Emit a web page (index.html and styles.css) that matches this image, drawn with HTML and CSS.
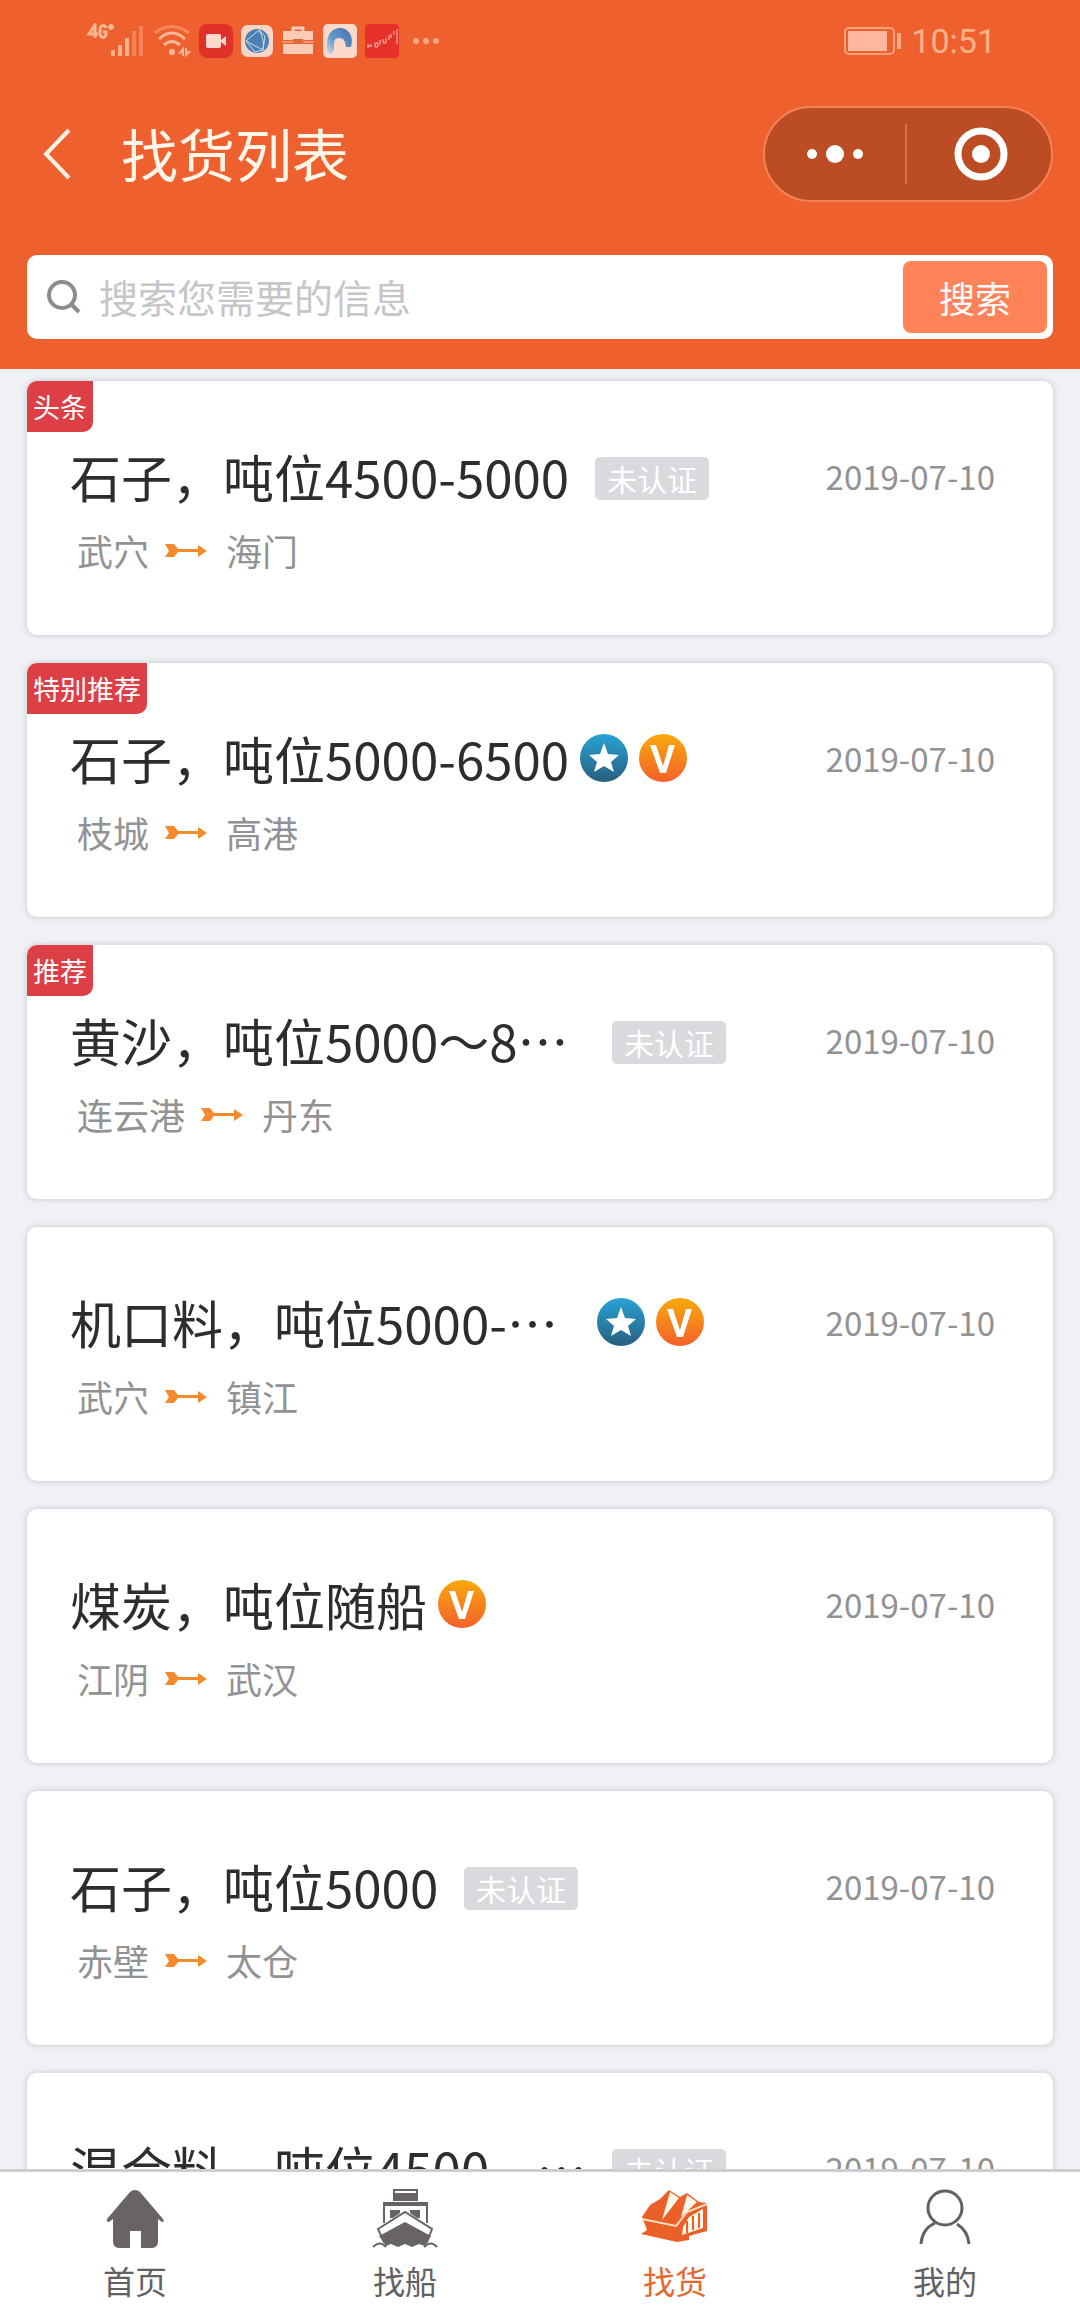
FILE: index.html
```html
<!DOCTYPE html>
<html lang="zh-CN">
<head>
<meta charset="utf-8">
<meta name="viewport" content="width=device-width, initial-scale=1">
<title>找货列表</title>
<link rel="stylesheet" href="styles.css">
</head>
<body>
<svg class="defs" width="0" height="0" aria-hidden="true">
  <defs>
    <linearGradient id="blue" x1="0" y1="0" x2="0" y2="1"><stop offset="0" stop-color="#27a3d4"/><stop offset="1" stop-color="#285f80"/></linearGradient>
    <linearGradient id="amber" x1="0" y1="0" x2="0" y2="1"><stop offset="0" stop-color="#f8a90c"/><stop offset="1" stop-color="#f4602a"/></linearGradient>
    <linearGradient id="swirl" x1="1" y1="0" x2="0" y2="1"><stop offset="0" stop-color="#4a6fae"/><stop offset="0.6" stop-color="#5f9ccb"/><stop offset="1" stop-color="#e6e2e4"/></linearGradient>
    <symbol id="star" viewBox="0 0 48 48"><circle cx="24" cy="24" r="24" fill="url(#blue)"/><path d="M24 9l4 11 11 1-8 7 3 10-10-6-10 6 3-10-8-7 11-1z" fill="#fff"/></symbol>
    <symbol id="vip" viewBox="0 0 48 48"><circle cx="24" cy="24" r="24" fill="url(#amber)"/><path d="M11 11h6l7 21 6-21h6L27 39h-6z" fill="#fff"/></symbol>
    <symbol id="arrow" viewBox="0 0 44 16"><path d="M1 1h9l4 5h20V2l9 6-9 6V9H14l-4 5H1l4-6z" fill="#f48a2c"/></symbol>
  </defs>
</svg>
<div class="app">
  <header class="header">
    <div class="status">
      <div class="status-left">
        <svg width="58" height="36" viewBox="0 0 58 36" fill="#ffb08a"><g fill="none" stroke="#ffb895" stroke-width="3"><path d="M8 15V2L2 11h9M19 5c-1-4-6-3-6 2v3c0 6 6 5 6 1V9h-3M21 4h6M24 1v6"/></g><rect x="24" y="27" width="4" height="6"/><rect x="31" y="22" width="4" height="11"/><rect x="38" y="15" width="4" height="18"/><path d="M45 8h4v25h-4zM52 3h4v30h-4z" opacity=".45"/></svg>
        <svg width="38" height="36" viewBox="0 0 38 36" fill="none" stroke="#ffb895" stroke-width="3"><path d="M2 10Q18-3 36 10" opacity=".45"/><path d="M6 16q13-12 26 0M11 22q8-7 16 0"/><circle cx="19" cy="29" r="2" fill="#ffb895" stroke-width="2"/><path d="M26 31l4-5v7M33 25v7l4-4" stroke-width="2"/></svg>
        <svg width="34" height="34" viewBox="0 0 34 34"><rect width="34" height="34" rx="8" fill="#e0302a"/><rect x="7" y="10" width="15" height="14" rx="2" fill="#ffd9cd"/><path d="M22 16l5-4v10l-5-4z" fill="#ffd9cd"/></svg>
        <svg width="32" height="32" viewBox="0 0 32 32"><rect width="32" height="32" rx="7" fill="#fbd5c6"/><circle cx="16" cy="16" r="12" fill="#4a80b4"/><g fill="none" stroke="#cfdde8" stroke-width="1"><path d="M5 16L18 5l6 6-2 14-8 2zM18 5q6 10 4 20M5 16l17 9"/></g></svg>
        <svg width="34" height="30" viewBox="0 0 34 30"><path d="M12 5V2h10v3" fill="none" stroke="#fbcbb5" stroke-width="3"/><path d="M2 5h30v9H2zM2 18h30v10H2z" fill="#fbcbb5"/><path d="M1 16h32" stroke="#fbcbb5" stroke-width="1"/><rect x="12" y="13" width="10" height="4" fill="#e06a3c"/></svg>
        <svg width="34" height="34" viewBox="0 0 34 34"><rect width="34" height="34" rx="5" fill="#fbd8ca"/><path d="M5 31C1 13 8 4 17 4c9 0 14 9 11 19h-5c-1-6-2-9-7-9-6 0-5 6-5 10 0 3-2 6-6 7z" fill="url(#swirl)"/></svg>
        <svg width="34" height="34" viewBox="0 0 34 34"><rect width="34" height="34" rx="4" fill="#e6302a"/><path d="M3 20v4m0-2h3m0-2v3m4-4v4h3v-4zm5-3v5m3-6v4h3v-5m3-3v5m2-6v4m3-7v4m3-6v15" fill="none" stroke="#ffc4b4" stroke-width="1"/></svg>
        <svg class="more" width="26" height="8" viewBox="0 0 26 8" fill="#ffa883"><circle cx="3" cy="4" r="3"/><circle cx="13" cy="4" r="3"/><circle cx="23" cy="4" r="3"/></svg>
      </div>
      <div class="status-right">
        <svg width="58" height="28" viewBox="0 0 58 28"><rect x="1" y="1" width="49" height="26" rx="4" fill="none" stroke="#ffa27c" stroke-width="2"/><rect x="4" y="4" width="39" height="20" fill="#ffb7a2"/><rect x="53" y="6" width="4" height="16" fill="#ffa883"/></svg>
        <span class="clock">10:51</span>
      </div>
    </div>
    <div class="nav">
      <button class="back" aria-label="返回"><svg width="28" height="52" viewBox="0 0 28 52" fill="none" stroke="#fff3e4" stroke-width="4"><path d="M26 2L3 26l23 24"/></svg></button>
      <h1 class="page-title">找货列表</h1>
      <div class="capsule">
        <button class="capsule-btn" aria-label="更多"><svg width="58" height="20" viewBox="0 0 58 20" fill="#fff"><circle cx="6" cy="10" r="5"/><circle cx="29" cy="10" r="9"/><circle cx="52" cy="10" r="5"/></svg></button>
        <button class="capsule-btn" aria-label="关闭"><svg width="54" height="54" viewBox="0 0 54 54"><circle cx="27" cy="27" r="23" fill="none" stroke="#fff" stroke-width="7"/><circle cx="27" cy="27" r="9" fill="#fff"/></svg></button>
      </div>
    </div>
    <form class="search">
      <label class="search-icon" for="q" aria-label="搜索"><svg width="34" height="34" viewBox="0 0 34 34" fill="none" stroke="#8c8c8c" stroke-width="4"><circle cx="15" cy="15" r="13"/><path d="M24 24l8 8"/></svg></label>
      <input class="search-input" id="q" type="text" placeholder="搜索您需要的信息">
      <button class="search-btn" type="submit">搜索</button>
    </form>
  </header>
  <main class="list">
    <article class="card">
      <span class="tag">头条</span>
      <div class="row"><h2 class="title">石子，吨位4500-5000</h2><span class="unverified">未认证</span><time class="date">2019-07-10</time></div>
      <p class="route"><span>武穴</span><svg class="arrow"><use href="#arrow"/></svg><span>海门</span></p>
    </article>
    <article class="card">
      <span class="tag">特别推荐</span>
      <div class="row"><h2 class="title">石子，吨位5000-6500</h2><svg class="mark"><use href="#star"/></svg><svg class="mark"><use href="#vip"/></svg><time class="date">2019-07-10</time></div>
      <p class="route"><span>枝城</span><svg class="arrow"><use href="#arrow"/></svg><span>高港</span></p>
    </article>
    <article class="card">
      <span class="tag">推荐</span>
      <div class="row"><h2 class="title title-cut">黄沙，吨位5000～8…</h2><span class="unverified">未认证</span><time class="date">2019-07-10</time></div>
      <p class="route"><span>连云港</span><svg class="arrow"><use href="#arrow"/></svg><span>丹东</span></p>
    </article>
    <article class="card">
      <div class="row"><h2 class="title title-cut">机口料，吨位5000-…</h2><svg class="mark"><use href="#star"/></svg><svg class="mark"><use href="#vip"/></svg><time class="date">2019-07-10</time></div>
      <p class="route"><span>武穴</span><svg class="arrow"><use href="#arrow"/></svg><span>镇江</span></p>
    </article>
    <article class="card">
      <div class="row"><h2 class="title">煤炭，吨位随船</h2><svg class="mark"><use href="#vip"/></svg><time class="date">2019-07-10</time></div>
      <p class="route"><span>江阴</span><svg class="arrow"><use href="#arrow"/></svg><span>武汉</span></p>
    </article>
    <article class="card">
      <div class="row"><h2 class="title">石子，吨位5000</h2><span class="unverified">未认证</span><time class="date">2019-07-10</time></div>
      <p class="route"><span>赤壁</span><svg class="arrow"><use href="#arrow"/></svg><span>太仓</span></p>
    </article>
    <article class="card">
      <div class="row"><h2 class="title title-cut">混合料，吨位4500-- …</h2><span class="unverified">未认证</span><time class="date">2019-07-10</time></div>
    </article>
  </main>
  <nav class="tabs">
    <a class="tab" href="#home"><svg width="60" height="60" viewBox="0 0 60 60" fill="#676367"><path d="M30 1q3 0 5 2l23 27q2 3-1 3l-4-3v22q0 7-6 7H36V42H25v17h-11q-6 0-6-7V30l-4 3q-3 0-2-3L25 3q2-2 5-2z"/></svg><span>首页</span></a>
    <a class="tab" href="#ships"><svg width="66" height="60" viewBox="0 0 66 60"><g fill="none" stroke="#676367" stroke-width="2"><path d="M22 1h23v10H22zM12 34V14h43v20"/><path d="M6 40l27-17 27 17-5 13H12z" fill="#fff"/></g><path d="M22 4h23v7H22zM13 14h42v3H13zM18 21h10v3l-7 5h-3zM38 21h10v8h-3l-7-5zM33 33l26 14-6 10-6-2-7 3-7-3-7 3-7-3-5 2-7-10z" fill="#676367"/><path d="M1 58q7-7 13 0M52 58q7-7 13 0" fill="none" stroke="#676367" stroke-width="2"/></svg><span>找船</span></a>
    <a class="tab tab-on" href="#cargo" aria-current="page"><svg width="68" height="60" viewBox="0 0 68 60"><path d="M28 1l11 7 7-4 12 9 8 1v28l-18 5v4l-12 2L0 45l6-4-5-13 8-12 10-6z" fill="#eb6028"/><path d="M29 3l9 6-17 22zM46 6l10 7-16 15zM42 38l6-10 14-8v19l-21 7z" fill="#fff8ea"/><path d="M1 30l34 7 11-14 20-8" fill="none" stroke="#ffe0c0" stroke-width="2"/><path d="M46 32v12M52 27v14M58 24v15" stroke="#eb6028" stroke-width="2"/></svg><span>找货</span></a>
    <a class="tab" href="#me"><svg width="54" height="60" viewBox="0 0 54 60" fill="none" stroke="#606065" stroke-width="3"><circle cx="27" cy="19" r="17"/><path d="M3 55q1-15 14-21M39 35q11 7 12 20"/></svg><span>我的</span></a>
  </nav>
</div>
</body>
</html>
```
FILE: styles.css
```css
* { box-sizing: border-box; }
body { margin: 0; font-family: "Noto Sans CJK SC", sans-serif; background: #eff1f4; }
button { border: 0; padding: 0; background: none; font: inherit; color: inherit; }
h1, h2, p { margin: 0; font-weight: 400; }
svg { display: block; flex: none; }
.defs { position: absolute; }
.app { height: 100vh; display: flex; flex-direction: column; overflow: hidden; }

.header { flex: none; padding: 0 27px 30px; background: #ee602e; }
.status { height: 82px; display: flex; align-items: center; justify-content: space-between; padding: 0 57px 0 60px; }
.status-left { display: flex; align-items: center; gap: 8px; }
.more { margin-left: 6px; }
.status-right { display: flex; align-items: center; gap: 9px; }
.clock { font: 34px/40px Roboto, sans-serif; color: #ffb18c; }
.nav { height: 143px; display: flex; align-items: center; margin: 0 0 30px; }
.back { width: 94px; padding-left: 16px; }
.page-title { flex: 1; padding-bottom: 4px; font-size: 57px; line-height: 72px; color: #fff6ea; }
.capsule { width: 290px; height: 96px; display: flex; align-items: center; border: 2px solid #f58256; border-radius: 48px; background: #bb4c24; }
.capsule-btn { flex: 1; height: 60px; display: flex; align-items: center; justify-content: center; }
.capsule-btn + .capsule-btn { padding-left: 4px; border-left: 2px solid #d8744d; }
.search { height: 84px; display: flex; align-items: center; padding: 6px; border-radius: 10px; background: #fff; }
.search-icon { padding: 0 18px 0 14px; }
.search-input { flex: 1; min-width: 0; height: 72px; border: 0; padding: 0 0 2px; outline: 0; background: none; font: inherit; font-size: 39px; color: #333; }
.search-input::placeholder { color: #c6c6c9; opacity: 1; }
.search-btn { width: 144px; height: 72px; border-radius: 8px; background: #ff8258; color: #fff; font-size: 36px; line-height: 70px; }

.list { flex: 1; min-height: 0; overflow: hidden; display: flex; flex-direction: column; gap: 28px; padding: 12px 27px 0; }
.card { position: relative; flex: none; height: 254px; padding: 59px 58px 0 43px; border-radius: 10px; background: #fff; box-shadow: 0 0 6px rgba(90, 95, 110, .3); }
.tag { position: absolute; left: 0; top: 0; padding: 0 6px; border-radius: 10px 0; background: #dc3f45; color: #fff; font-size: 27px; line-height: 51px; }
.row { display: flex; align-items: center; height: 72px; }
.title { font-size: 51px; line-height: 72px; color: #2d2d30; white-space: nowrap; }
.title-cut { width: 516px; }
.unverified { margin: 4px 0 0 26px; width: 114px; height: 43px; border-radius: 5px; background: #dadade; color: #fff; font-size: 30px; line-height: 43px; text-align: center; }
.mark { width: 48px; height: 48px; margin-left: 11px; }
.date { margin-left: auto; font-size: 33px; line-height: 72px; color: #929294; }
.route { display: flex; align-items: center; gap: 15px; padding: 2px 0 0 7px; font-size: 36px; line-height: 72px; color: #929294; }
.arrow { width: 44px; height: 16px; margin: 2px 3px 0 0; }

.tabs { flex: none; display: grid; grid-template-columns: repeat(4, 1fr); height: 143px; border-top: 3px solid #cccdd0; background: #fff; }
.tab { display: flex; flex-direction: column; align-items: center; padding-top: 17px; color: #606065; text-decoration: none; font-size: 32px; line-height: 63px; }
.tab-on { color: #e56730; }
```
